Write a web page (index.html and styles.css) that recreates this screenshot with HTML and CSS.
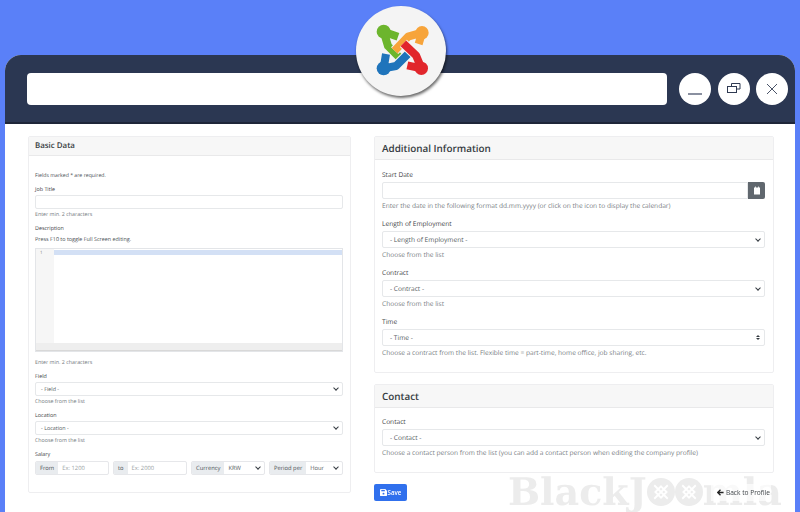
FILE: index.html
```html
<!DOCTYPE html>
<html lang="en">
<head>
<meta charset="utf-8">
<title>Job form</title>
<link rel="stylesheet" href="styles.css">
</head>
<body>
<div class="window">
  <header class="titlebar">
    <div class="address"></div>
    <button class="win-btn"><svg width="20" height="20" viewBox="0 0 20 20"><path d="M3 15h14" stroke="#3b4660" stroke-width="1.2"/></svg></button>
    <button class="win-btn"><svg width="20" height="20" viewBox="0 0 20 20" fill="none" stroke="#2f3a52" stroke-width="1"><path d="M7.5 7V4.5h8.5V10h-3.5"/><rect x="3.5" y="7.5" width="9" height="6"/></svg></button>
    <button class="win-btn"><svg width="20" height="20" viewBox="0 0 20 20" stroke="#4a5468" stroke-width="1"><path d="M5 5l10 10M15 5L5 15"/></svg></button>
  </header>
  <main class="content">
    <div class="watermark">BlackJ<span class="wm-o"><svg width="18" height="18" viewBox="0 0 16 16" fill="none" stroke="#fff" stroke-width="1.6"><path d="M2 2l12 12M14 2L2 14M8 3l5 5-5 5-5-5z"/></svg></span><span class="wm-o"><svg width="18" height="18" viewBox="0 0 16 16" fill="none" stroke="#fff" stroke-width="1.6"><path d="M2 2l12 12M14 2L2 14M8 3l5 5-5 5-5-5z"/></svg></span>mla</div>
    <section class="card basic">
      <h2 class="card-head small">Basic Data</h2>
      <div class="card-body small-body">
        <p class="req">Fields marked * are required.</p>
        <label>Job Title</label>
        <div class="input"></div>
        <p class="help">Enter min. 2 characters</p>
        <label class="desc">Description</label>
        <p class="f10">Press F10 to toggle Full Screen editing.</p>
        <div class="editor">
          <div class="editor-main">
            <div class="gutter">1</div>
            <div class="lines"><div class="active-line"></div></div>
          </div>
          <div class="editor-foot"></div>
        </div>
        <p class="help after-editor">Enter min. 2 characters</p>
        <label>Field</label>
        <div class="input select">- Field -</div>
        <p class="help">Choose from the list</p>
        <label>Location</label>
        <div class="input select">- Location -</div>
        <p class="help">Choose from the list</p>
        <label>Salary</label>
        <div class="salary">
          <div class="group"><span class="addon">From</span><span class="ph">Ex: 1200</span></div>
          <div class="group"><span class="addon">to</span><span class="ph">Ex: 2000</span></div>
          <div class="group"><span class="addon">Currency</span><span class="ph val select">KRW</span></div>
          <div class="group"><span class="addon">Period per</span><span class="ph val select">Hour</span></div>
        </div>
      </div>
    </section>
    <div class="right">
      <section class="card info">
        <h2 class="card-head">Additional Information</h2>
        <div class="card-body">
          <label>Start Date</label>
          <div class="date"><div class="input"></div><span class="cal"><svg width="8" height="9" viewBox="0 0 8 9"><path d="M1 1.5h1.2V.5h.8v1h2v-1h.8v1H7v7H1z" fill="#fff"/></svg></span></div>
          <p class="help">Enter the date in the following format dd.mm.yyyy (or click on the icon to display the calendar)</p>
          <label>Length of Employment</label>
          <div class="input select">- Length of Employment -</div>
          <p class="help">Choose from the list</p>
          <label>Contract</label>
          <div class="input select">- Contract -</div>
          <p class="help">Choose from the list</p>
          <label>Time</label>
          <div class="input select updown">- Time -</div>
          <p class="help">Choose a contract from the list. Flexible time = part-time, home office, job sharing, etc.</p>
        </div>
      </section>
      <section class="card contact">
        <h2 class="card-head">Contact</h2>
        <div class="card-body">
          <label>Contact</label>
          <div class="input select">- Contact -</div>
          <p class="help">Choose a contact person from the list (you can add a contact person when editing the company profile)</p>
        </div>
      </section>
      <div class="actions">
        <button class="save"><svg width="7" height="7" viewBox="0 0 8 8"><path d="M0 1a1 1 0 0 1 1-1h5l2 2v5a1 1 0 0 1-1 1H1a1 1 0 0 1-1-1z" fill="#fff"/><path d="M1.5 1h4v1.6h-4z" fill="#2f6fed"/><circle cx="4" cy="5.3" r="1.1" fill="#2f6fed"/></svg>Save</button>
        <button class="back"><svg width="7" height="7" viewBox="0 0 8 8"><path d="M4 .8L.8 4 4 7.2M1 4h6.5" fill="none" stroke="#222" stroke-width="1.5"/></svg>Back to Profile</button>
      </div>
    </div>
  </main>
</div>
<div class="logo">
  <svg width="60" height="60" viewBox="-3 3 180 180" fill="none" stroke-width="24" stroke-linejoin="round">
    <path class="halo" d="M35 35L78 50M35 35L48 78L92 122"/>
    <path d="M35 35L78 50M35 35L48 78L92 122" stroke="#6cb52d"/>
    <circle cx="35" cy="35" r="21" fill="#6cb52d"/>
    <path class="halo" d="M150 38L108 50L68 92M150 38L140 72"/>
    <path d="M150 38L108 50L68 92M150 38L140 72" stroke="#f7a43a"/>
    <circle cx="150" cy="38" r="20" fill="#f7a43a"/>
    <path class="halo" d="M35 145L72 138L114 96M35 145L42 102"/>
    <path d="M35 145L72 138L114 96M35 145L42 102" stroke="#1f74bb"/>
    <circle cx="35" cy="145" r="21" fill="#1f74bb"/>
    <path class="halo" d="M148 145L132 106L94 70M148 145L106 136"/>
    <path d="M148 145L132 106L94 70M148 145L106 136" stroke="#e1262c"/>
    <circle cx="148" cy="145" r="20" fill="#e1262c"/>
  </svg>
</div>
</body>
</html>
```
FILE: styles.css
```css
* { box-sizing: border-box; }
html, body { margin: 0; height: 100%; }
body { background: #5a80f8; overflow: hidden; position: relative; font-family: "Open Sans", sans-serif; color: #3f4448; padding: 55px 5px 0; text-rendering: geometricPrecision; }
.window { height: 457px; display: flex; flex-direction: column; background: #fff; border-radius: 16px 16px 0 0; overflow: hidden; filter: blur(.35px); }
.titlebar { height: 69px; flex: none; background: #2b3752; border-bottom: 2px solid #1e2639; display: flex; align-items: center; padding: 1px 7px 0 22px; gap: 6.5px; }
.address { flex: 1; height: 32px; background: #fff; border-radius: 4px; margin-right: 5.5px; }
.win-btn { width: 32px; height: 32px; border: 0; border-radius: 50%; background: #fff; padding: 0; display: flex; align-items: center; justify-content: center; }
.content { flex: 1; position: relative; display: flex; align-items: flex-start; gap: 23px; padding: 12px 21px 0 23px; opacity: .995; }
.card { position: relative; border: 1px solid #eeeef0; border-radius: 2px; background: #fff; }
.basic { width: 323px; height: 357px; flex: none; }
.right { flex: 1; display: flex; flex-direction: column; }
.info { height: 237px; }
.contact { height: 89px; margin-top: 11px; }
.card-head { margin: 0; height: 23px; background: #f7f7f7; border-bottom: 1px solid #e9e9ea; font-size: 9.9px; line-height: 23px; font-weight: 600; padding-left: 7px; color: #343a40; }
.card-head.small { height: 19px; line-height: 18px; font-size: 7.9px; padding-left: 6px; }
.card-body { padding: 9px 8px 0 7px; }
.contact .card-body { padding-top: 8px; }
label { display: block; font-size: 6.6px; line-height: 11px; margin-bottom: 2px; color: #3f4448; }
.help { margin: 0 0 7px; padding-top: 2px; font-size: 6.6px; line-height: 10px; color: #7a8085; }
.input { height: 17px; border: 1px solid #e6e8ea; border-radius: 2px; background: #fff; font-size: 6.6px; line-height: 15px; padding-left: 7px; color: #555b61; }
.select { position: relative; }
.select::after { content: ""; position: absolute; right: 4px; top: 50%; width: 3px; height: 3px; margin-top: -3px; border: solid #343a40; border-width: 0 1.3px 1.3px 0; transform: rotate(45deg); }
.updown::after { margin-top: 0; border: 0; width: 0; height: 0; transform: none; border-left: 2px solid transparent; border-right: 2px solid transparent; border-top: 2.5px solid #343a40; }
.updown::before { content: ""; position: absolute; right: 4px; top: 50%; margin-top: -3px; width: 0; height: 0; border-left: 2px solid transparent; border-right: 2px solid transparent; border-bottom: 2.5px solid #343a40; }
.date { display: flex; }
.date .input { flex: 1; border-radius: 2px 0 0 2px; }
.cal { width: 17px; height: 17px; flex: none; background: #5f666d; border-radius: 0 2px 2px 0; display: flex; align-items: center; justify-content: center; }
.small-body { padding: 15px 7px 0 6px; }
.small-body label { font-size: 5.4px; line-height: 8px; margin-bottom: 2px; }
.small-body .help { font-size: 5.3px; line-height: 8px; margin-bottom: 6px; padding-top: 1px; color: #72787d; }
.small-body .input { height: 14px; font-size: 5.4px; line-height: 12px; padding-left: 5px; }
.small-body .help.after-editor { padding-top: 6px; }
.req { margin: 0 0 6px; font-size: 5.2px; line-height: 8px; color: #4a5055; }
.f10 { margin: 3px 0 5px; font-size: 5.4px; line-height: 8px; color: #4a5055; }
.small-body .desc { margin-bottom: 0; }
.editor { height: 104px; border: 1px solid #e3e5e8; display: flex; flex-direction: column; }
.editor-main { flex: 1; display: flex; background: #fff; }
.gutter { width: 18px; background: #f6f6f6; font-size: 4.5px; padding: 1px 0 0 4px; color: #888; }
.lines { flex: 1; padding-top: 1px; }
.active-line { height: 5px; background: #d3e0f5; }
.editor-foot { height: 8px; background: #eeeeee; border-bottom: 1px solid #d8d8d8; }
.salary { display: flex; gap: 4px; margin-top: 3px; }
.group { flex: 1; display: flex; height: 14px; border: 1px solid #e6e7ea; border-radius: 2px; font-size: 5.8px; line-height: 12px; overflow: hidden; }
.addon { background: #e9ecef; padding: 0 4px; color: #4a5055; flex: none; }
.ph { flex: 1; padding-left: 4px; color: #9a9fa4; position: relative; }
.val { color: #555b61; }
.actions { display: flex; justify-content: space-between; align-items: center; margin-top: 11px; position: relative; z-index: 2; }
.save { width: 33px; height: 17px; border: 0; border-radius: 2px; background: #2f6fed; color: #fff; font: 600 6.2px "Open Sans", sans-serif; display: flex; align-items: center; justify-content: center; gap: 1px; padding: 0; }
.back { height: 17px; width: 60px; margin-right: 3px; background: rgba(255,255,255,.7); border: 0; font: 6.6px "Open Sans", sans-serif; color: #3f4448; display: flex; align-items: center; justify-content: center; gap: 2px; padding: 0 0 0 5px; }
.logo { position: absolute; left: 356px; top: 6px; width: 90px; height: 90px; border-radius: 50%; background: #f4f4f4; box-shadow: 1px 2px 3px rgba(0,0,0,.6); display: flex; align-items: center; justify-content: center; }
.halo { stroke: #f4f4f4; stroke-width: 30; }
.watermark { position: absolute; left: 503px; top: 349px; height: 38px; display: flex; align-items: center; font: 700 38px "DejaVu Serif", serif; line-height: 38px; color: #ececec; white-space: nowrap; }
.wm-o { width: 28px; height: 28px; border-radius: 50%; background: #ececec; display: flex; align-items: center; justify-content: center; }
```
